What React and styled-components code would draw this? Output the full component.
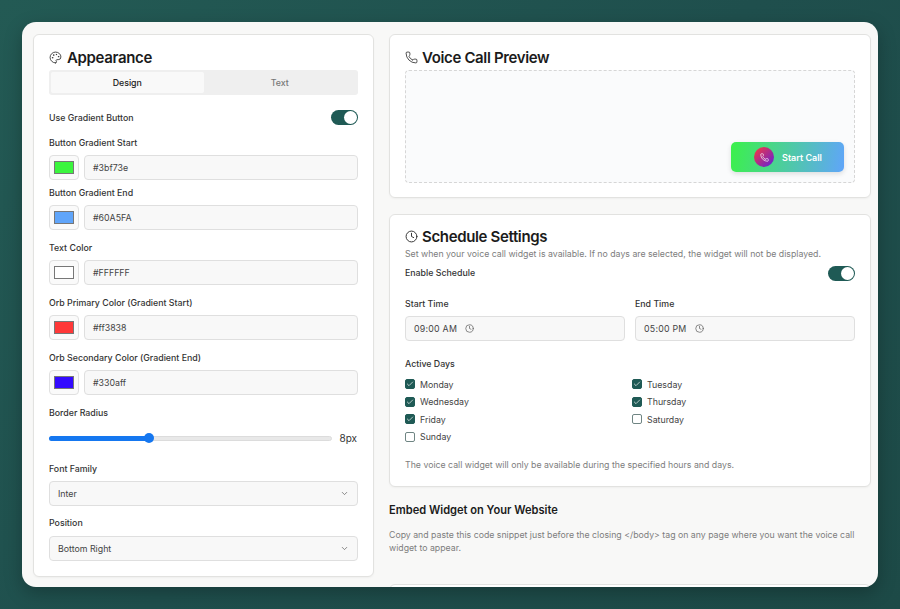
import React from "react";
import styled, { createGlobalStyle } from "styled-components";
import { Palette, Phone, Clock, ChevronDown, Check } from "lucide-react";

const Global = createGlobalStyle`
  html, body { margin: 0; padding: 0; height: 100%; }
  body { background: #1f4f4c; font-family: Inter, "Liberation Sans", sans-serif; color: #1c1c1c; overflow: hidden; }
  * { box-sizing: border-box; }
`;
const Page = styled.div`
  width: 900px; height: 609px; padding: 22px;
  background: linear-gradient(135deg, #235a54 0%, #1f4f4d 50%, #1d4a47 100%);
`;
const Win = styled.div`
  width: 856px; height: 565px; background: #f8f8f7; border-radius: 14px; overflow: hidden;
  padding: 12px 7px 0 11px; display: grid; grid-template-columns: 341px 482px; column-gap: 15px; align-items: start;
  box-shadow: 0 6px 18px rgba(0,0,0,.25);
`;
const Card = styled.section`
  background: #fff; border: 1px solid #e2e2e0; border-radius: 6px; padding: ${p => p.$pad};
  height: ${p => p.$h}px; margin-top: ${p => p.$mt || 0}px; box-shadow: 0 1px 2px rgba(0,0,0,.04);
`;
const Column = styled.div`display: flex; flex-direction: column;`;
const Title = styled.h2`
  margin: 0; height: 22px; display: flex; align-items: center; gap: ${p => p.$gap}px; font-size: 15px; font-weight: 600; letter-spacing: -0.35px; color: #1b1b1b;
  svg { flex: none; color: #333; }
`;
const Tabs = styled.div`
  margin-top: 2px; height: 25px; background: #efefef; border-radius: 3px; padding: 2px; display: grid; grid-template-columns: 1fr 1fr;
`;
const Tab = styled.div`
  display: flex; align-items: center; justify-content: center; font-size: 8.8px; font-weight: 500; border-radius: 2px;
  color: ${p => p.$on ? "#222" : "#777"}; background: ${p => p.$on ? "#f9f9f9" : "transparent"};
`;
const ToggleRow = styled.div`
  display: flex; align-items: center; justify-content: space-between; height: 15px; margin-top: ${p => p.$mt}px;
`;
const Label = styled.div`
  font-size: 8.8px; font-weight: 500; color: #333; line-height: 12px;
`;
const Toggle = styled.div`
  width: 27px; height: 15px; background: #1f5a55; border-radius: 8px; position: relative;
  &::after { content: ""; position: absolute; right: 1px; top: 1px; width: 13px; height: 13px; border-radius: 50%; background: #fff; }
`;
const Field = styled.div`
  margin-top: ${p => p.$mt}px; display: flex; flex-direction: column; gap: ${p => p.$gap ?? 6}px;
`;
const ColorRow = styled.div`display: flex; gap: 5px;`;
const Swatch = styled.div`
  width: 30px; height: 25px; border: 1px solid #e0e0e0; border-radius: 4px; background: #fafafa; padding: 5px 4px; flex: none;
  span { display: block; width: 100%; height: 100%; background: ${p => p.$c}; border: 1px solid #777; }
`;
const Input = styled.div`
  flex: 1 0 auto; height: 25px; border: 1px solid #dfdfdf; border-radius: 4px; background: #f8f8f8; padding: 0 8px; display: flex; align-items: center;
  justify-content: ${p => p.$between ? "space-between" : "flex-start"}; gap: ${p => p.$gap || 0}px;
  font-size: 8.8px; color: #444; letter-spacing: ${p => p.$track || 0}px;
  svg { color: #666; flex: none; }
`;
const SliderRow = styled.div`display: flex; align-items: center; gap: 7px; height: 12px;`;
const Track = styled.div`
  flex: 1; height: 5px; border-radius: 3px; background: #e8e8e8; border: 1px solid #dcdcdc; position: relative;
`;
const Fill = styled.div`
  position: absolute; left: -1px; top: -1px; height: 5px; border-radius: 3px; background: #1577f0;
  &::after { content: ""; position: absolute; right: -4px; top: -2.5px; width: 10px; height: 10px; border-radius: 50%; background: #1577f0; }
`;
const SliderValue = styled.span`font-size: 10px; color: #333; margin-right: 1px;`;
const Stage = styled.div`
  margin-top: 2px; height: 113px; border: 1px dashed #d6d6d6; border-radius: 4px; background: #fafbfc; display: flex; align-items: flex-end; justify-content: flex-end; padding: 0 10px 10px 0;
`;
const CallButton = styled.div`
  width: 113px; height: 30px; border-radius: 5px; background: linear-gradient(100deg, #3bf14a 0%, #60a5fa 100%); display: flex; align-items: center; justify-content: center; gap: 8px;
  box-shadow: 0 2px 5px rgba(0,0,0,.12); color: #fff; font-size: 9px; font-weight: 600; padding-left: 1px;
`;
const Orb = styled.span`
  width: 20px; height: 20px; border-radius: 50%; background: linear-gradient(135deg, #ff3838 0%, #5a1fe0 100%); display: flex; align-items: center; justify-content: center; color: #fff;
`;
const Muted = styled.p`
  margin: ${p => p.$m || 0}; font-size: 8.75px; line-height: 12.7px; color: #7d7d7d;
`;
const TimeGrid = styled.div`display: grid; grid-template-columns: 220px 220px; column-gap: 10px; margin-top: 17px;`;
const Days = styled.div`display: grid; grid-template-columns: 227px 200px; margin-top: 6px;`;
const Day = styled.label`
  display: flex; align-items: center; gap: 5px; height: 17.5px; font-size: 8.8px; color: #444;
`;
const Box = styled.span`
  width: 10px; height: 10px; border-radius: 2px; display: flex; align-items: center; justify-content: center; color: #fff; flex: none;
  background: ${p => p.$on ? "#1f5a55" : "#fff"}; border: 1px solid ${p => p.$on ? "#1f5a55" : "#6f8583"};
`;
const EmbedTitle = styled.h3`margin: 16px 0 0; font-size: 11.1px; line-height: 14px; font-weight: 600; color: #1b1b1b;`;
const Stub = styled.div`margin-top: 30px; height: 20px; border: 1px solid #e2e2e0; border-radius: 6px; background: #fff;`;

const ColorField = ({ label, color, value, mt }) => (
  <Field $mt={mt}>
    <Label>{label}</Label>
    <ColorRow>
      <Swatch $c={color}><span /></Swatch>
      <Input>{value}</Input>
    </ColorRow>
  </Field>
);

const days = [["Monday", 1], ["Tuesday", 1], ["Wednesday", 1], ["Thursday", 1], ["Friday", 1], ["Saturday", 0], ["Sunday", 0]];

export default function App() {
  return (
    <Page>
      <Global />
      <Win>
        <Card $h={543} $pad="11px 15px 0">
          <Title $gap={5}><Palette size={13} strokeWidth={1.6} />Appearance</Title>
          <Tabs><Tab $on>Design</Tab><Tab>Text</Tab></Tabs>
          <ToggleRow $mt={15}><Label>Use Gradient Button</Label><Toggle /></ToggleRow>
          <ColorField label="Button Gradient Start" color="#3bf53e" value="#3bf73e" mt={12} />
          <ColorField label="Button Gradient End" color="#60a5fa" value="#60A5FA" mt={7} />
          <ColorField label="Text Color" color="#ffffff" value="#FFFFFF" mt={12} />
          <ColorField label="Orb Primary Color (Gradient Start)" color="#ff3838" value="#ff3838" mt={12} />
          <ColorField label="Orb Secondary Color (Gradient End)" color="#330aff" value="#330aff" mt={12} />
          <Field $mt={12} $gap={13}>
            <Label>Border Radius</Label>
            <SliderRow>
              <Track><Fill style={{ width: "36%" }} /></Track>
              <SliderValue>8px</SliderValue>
            </SliderRow>
          </Field>
          <Field $mt={19} $gap={6}>
            <Label>Font Family</Label>
            <Input $between>Inter<ChevronDown size={9} /></Input>
          </Field>
          <Field $mt={11} $gap={7}>
            <Label>Position</Label>
            <Input $between>Bottom Right<ChevronDown size={9} /></Input>
          </Field>
        </Card>
        <Column>
          <Card $h={164} $pad="11px 15px 0">
            <Title $gap={4}><Phone size={13} strokeWidth={1.6} />Voice Call Preview</Title>
            <Stage>
              <CallButton><Orb><Phone size={9} strokeWidth={1.8} /></Orb>Start Call</CallButton>
            </Stage>
          </Card>
          <Card $h={273} $mt={16} $pad="10px 15px 0">
            <Title $gap={4}><Clock size={13} strokeWidth={1.8} />Schedule Settings</Title>
            <Muted $m="1px 0 0">Set when your voice call widget is available. If no days are selected, the widget will not be displayed.</Muted>
            <ToggleRow $mt={5}><Label>Enable Schedule</Label><Toggle /></ToggleRow>
            <TimeGrid>
              <Field $mt={0}><Label>Start Time</Label><Input $gap={8} $track={0.25}>09:00 AM<Clock size={9} strokeWidth={2} /></Input></Field>
              <Field $mt={0}><Label>End Time</Label><Input $gap={8} $track={0.25}>05:00 PM<Clock size={9} strokeWidth={2} /></Input></Field>
            </TimeGrid>
            <Field $mt={17} $gap={0}>
              <Label>Active Days</Label>
              <Days>
                {days.map(([d, on]) => (
                  <Day key={d}><Box $on={!!on}>{on ? <Check size={8} strokeWidth={2} /> : null}</Box>{d}</Day>
                ))}
              </Days>
            </Field>
            <Muted $m="13px 0 0">The voice call widget will only be available during the specified hours and days.</Muted>
          </Card>
          <EmbedTitle>Embed Widget on Your Website</EmbedTitle>
          <Muted $m="12px 0 0">Copy and paste this code snippet just before the closing &lt;/body&gt; tag on any page where you want the voice call widget to appear.</Muted>
          <Stub />
        </Column>
      </Win>
    </Page>
  );
}
